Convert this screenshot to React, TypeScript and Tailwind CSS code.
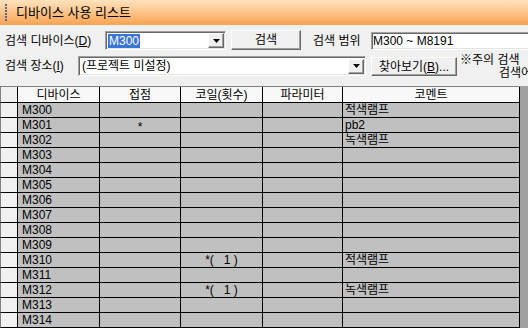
import React from 'react'

const font = { fontFamily: '"Liberation Sans", "Noto Sans CJK KR", sans-serif' }

const rows: { dev: string; contact?: string; coil?: string; comment?: string }[] = [
  { dev: 'M300', comment: '적색램프' },
  { dev: 'M301', contact: '*', comment: 'pb2' },
  { dev: 'M302', comment: '녹색램프' },
  { dev: 'M303' },
  { dev: 'M304' },
  { dev: 'M305' },
  { dev: 'M306' },
  { dev: 'M307' },
  { dev: 'M308' },
  { dev: 'M309' },
  { dev: 'M310', coil: '*(   1 )', comment: '적색램프' },
  { dev: 'M311' },
  { dev: 'M312', coil: '*(   1 )', comment: '녹색램프' },
  { dev: 'M313' },
  { dev: 'M314' },
]

function DropArrow() {
  return (
    <div className="flex h-[15px] w-[16px] shrink-0 items-center justify-center border border-t-white border-l-white border-b-[#696969] border-r-[#696969] bg-[#f0f0f0] shadow-[inset_-1px_-1px_0_#a0a0a0]">
      <svg width="7" height="4" viewBox="0 0 7 4">
        <path d="M0 0h7L3.5 4z" fill="#000" />
      </svg>
    </div>
  )
}

function Sunken({ className, children }: { className: string; children?: React.ReactNode }) {
  return (
    <div
      className={
        'flex shrink-0 items-center border border-t-[#a0a0a0] border-l-[#a0a0a0] border-b-white border-r-white bg-white shadow-[inset_1px_1px_0_#696969,inset_-1px_-1px_0_#e3e3e3] ' +
        className
      }
    >
      {children}
    </div>
  )
}

function Btn({ className, children }: { className: string; children: React.ReactNode }) {
  return (
    <div
      className={
        'flex shrink-0 items-center justify-center border border-t-white border-l-white border-b-[#696969] border-r-[#696969] bg-[#f0f0f0] shadow-[inset_-1px_-1px_0_#a0a0a0] text-[12px] text-black ' +
        className
      }
    >
      {children}
    </div>
  )
}

export default function App() {
  return (
    <div className="h-[328px] w-[528px] overflow-hidden bg-[#f0f0f0] text-black" style={font}>
      {/* title bar */}
      <div className="flex h-[25px] items-center bg-gradient-to-b from-[#fde3bd] to-[#f8a24e]">
        <div className="ml-[5px] flex h-[18px] w-[2px] flex-col justify-between">
          {Array.from({ length: 6 }).map((_, i) => (
            <div key={i} className="h-[2px] w-[2px] bg-[#5a6b8c]" />
          ))}
        </div>
        <span className="ml-[9px] text-[13px] leading-none">디바이스 사용 리스트</span>
      </div>

      {/* search row 1 */}
      <div className="mt-[6px] flex h-[19px] items-center">
        <div className="w-[105px] shrink-0 pl-[5px] text-[12px] leading-none">
          검색 디바이스(<span className="underline">D</span>)
        </div>
        <Sunken className="h-[19px] w-[121px] justify-between pl-[2px] pr-[1px]">
          <span className="bg-[#3875d7] px-px text-[12px] leading-[14px] text-white">M300</span>
          <DropArrow />
        </Sunken>
        <Btn className="-mt-px ml-[5px] h-[20px] w-[70px]">검색</Btn>
        <div className="ml-[12px] w-[58px] shrink-0 text-[12px] leading-none">검색 범위</div>
        <Sunken className="h-[18px] w-[170px] pl-[1px] text-[12px]">M300 ~ M8191</Sunken>
      </div>

      {/* search row 2 */}
      <div className="mt-[6px] flex h-[20px] items-start">
        <div className="flex h-[20px] w-[78px] shrink-0 items-center pl-[5px] text-[12px] leading-none">
          검색 장소(<span className="underline">I</span>)
        </div>
        <Sunken className="h-[20px] w-[288px] justify-between pl-[3px] pr-[1px] text-[12px]">
          <span>(프로젝트 미설정)</span>
          <DropArrow />
        </Sunken>
        <Btn className="ml-[5px] mt-px h-[19px] w-[86px]">
          <span>
            찾아보기(<span className="underline">B</span>)...
          </span>
        </Btn>
        <div className="-mt-[2px] ml-[3px] shrink-0 whitespace-nowrap text-[12px] leading-[13px]">
          <div>※주의 검색</div>
          <div className="pl-[39px]">검색어</div>
        </div>
      </div>

      {/* grid */}
      <div className="mt-[10px] flex bg-[#a0a0a0]">
        <div className="flex flex-col">
          <div className="flex h-[17px] border-t border-t-[#808080] text-[12px] leading-none">
            <div className="h-full w-[18px] border-b border-l border-r border-black border-l-[#808080] bg-[#f0f0f0]" />
            {[
              ['디바이스', 'w-[82px]'],
              ['접점', 'w-[81px]'],
              ['코일(횟수)', 'w-[82px]'],
              ['파라미터', 'w-[80px]'],
              ['코멘트', 'w-[177px]'],
            ].map(([t, w]) => (
              <div
                key={t}
                className={'flex h-full items-center justify-center border-b border-r border-black bg-[#f8f8f8] ' + w}
              >
                {t}
              </div>
            ))}
          </div>
          {rows.map((r) => (
            <div key={r.dev} className="flex h-[15px] text-[12px] leading-none">
              <div className="h-full w-[18px] border-b border-l border-r border-black border-l-[#808080] bg-[#f0f0f0]" />
              <div className="flex h-full w-[82px] items-center border-b border-r border-black bg-[#c0c0c0] pl-[4px]">
                {r.dev}
              </div>
              <div className="flex h-full w-[81px] items-center justify-center border-b border-r border-black bg-[#c0c0c0] pt-[3px]">
                {r.contact}
              </div>
              <div className="flex h-full w-[82px] items-center justify-center whitespace-pre border-b border-r border-black bg-[#c0c0c0]">
                {r.coil}
              </div>
              <div className="h-full w-[80px] border-b border-r border-black bg-[#c0c0c0]" />
              <div className="flex h-full w-[177px] items-center border-b border-r border-black bg-[#c0c0c0] pl-[2px]">
                {r.comment}
              </div>
            </div>
          ))}
        </div>
      </div>
    </div>
  )
}
